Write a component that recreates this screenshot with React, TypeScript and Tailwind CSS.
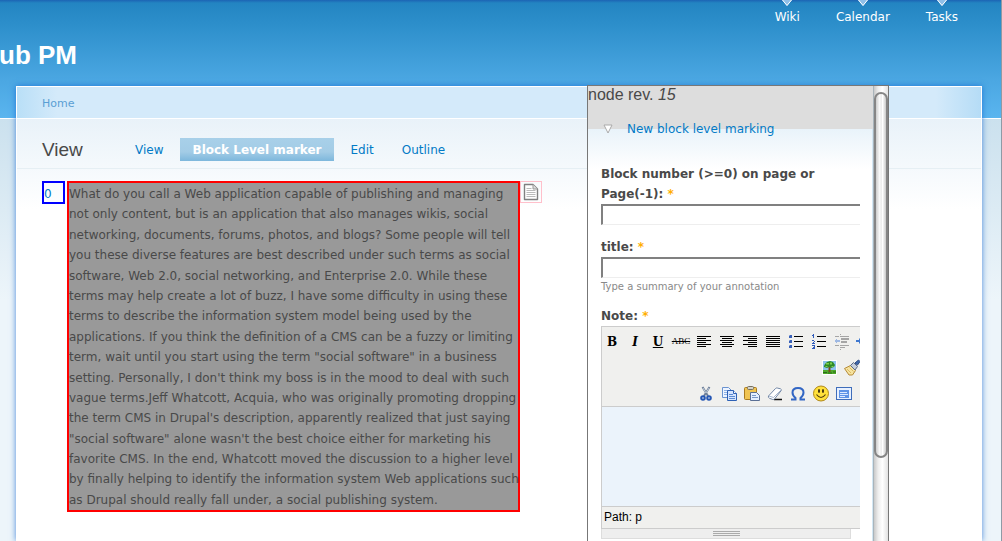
import React from "react";

const navLinks = ["Wiki", "Calendar", "Tasks"];

const sans = "font-['DejaVu_Sans',sans-serif]";
const arial = "font-['Liberation_Sans',sans-serif]";

function Lines({ rows }: { rows: [number, number][] }) {
  return (
    <svg width="20" height="20" viewBox="0 0 20 20" shapeRendering="crispEdges">
      {rows.map(([x, w], i) => (
        <rect key={i} x={x} y={4 + i * 2} width={w} height="1" fill="#000" />
      ))}
    </svg>
  );
}

function ListIcon({ numbered }: { numbered?: boolean }) {
  return (
    <svg width="20" height="20" viewBox="0 0 20 20" shapeRendering="crispEdges">
      {[4, 9, 14].map((y) => (
        <rect key={y} x="8" y={y} width="9" height="1" fill="#000" />
      ))}
      {numbered ? (
        <path
          d="M4 2h1v4H4zM3 3h1v1H3zM3 8h2v1H3zM5 9h1v1H5zM4 10h1v1H4zM3 11h3v1H3zM3 13h3v1H3zM5 14h1v3H5zM4 15h1v1H4zM3 16h2v1H3z"
          fill="#2f5bbb"
        />
      ) : (
        [4, 9, 14].map((y) => (
          <g key={y}>
            <rect x="3" y={y - 1} width="3" height="3" fill="#3a61b8" />
            <rect x="3" y={y - 1} width="1" height="1" fill="#8fa9dd" />
          </g>
        ))
      )}
    </svg>
  );
}

function Outdent() {
  return (
    <svg width="20" height="20" viewBox="0 0 20 20" shapeRendering="crispEdges" fill="#a5a5a5">
      <path d="M3 4h4v1H3zM8 4h9v1H8zM9 6h8v2H9zM9 9h6v2H9zM3 13h4v1H3zM8 13h9v1H8zM8 15h5v1H8zM8 2h1v1H8zM8 17h1v1H8z" />
      <path d="M2 9l3-3v2h3v2H5v2z" fill="#9fb9e3" />
    </svg>
  );
}

function IndentEdge() {
  return (
    <svg width="20" height="20" viewBox="0 0 20 20">
      <path d="M7 9l-3-3v2H1v2h3v2z" fill="#3f78cf" />
    </svg>
  );
}

function Tree() {
  return (
    <svg width="20" height="20" viewBox="0 0 20 20">
      <rect x="3" y="2" width="15" height="15" fill="#fff" />
      <rect x="4" y="3" width="13" height="9" fill="#8fc3ee" />
      <rect x="4" y="12" width="13" height="4" fill="#4fa92a" />
      <path d="M9.500 8h2v6h-2z" fill="#7a4a1c" />
      <path d="M5 8l1-2 2-2 3-1 3 1 2 3-1 2-3 1-2-1-2 1-3-1z" fill="#2f8a28" />
      <path d="M7 5h3v1.500H7zM11 4.500h2v2h-2zM12.500 8h2v1h-2zM6.500 8h2v1h-2z" fill="#7ed04c" />
      <path d="M4 14.500h4M9 15h4M14 14h3" stroke="#2a6b18" />
    </svg>
  );
}

function Brush() {
  return (
    <svg width="20" height="20" viewBox="0 0 20 20">
      <path d="M2.500 10.500l6-3 5 5-3 4.500H7z" fill="#f6e3a0" stroke="#b58a35" />
      <path d="M5 11l4 4M7.500 9.500l4 4" stroke="#dcbb66" />
      <path d="M8.500 7.500l3-3 4 4-2.500 3.500z" fill="#c6cfdd" stroke="#5d6b85" />
      <path d="M13 5l3.500-3 1.500 1.500L15.500 7z" fill="#3f68ac" stroke="#2d4c84" />
    </svg>
  );
}

function Scissors() {
  return (
    <svg width="20" height="20" viewBox="0 0 20 20" fill="none">
      <path d="M6.500 3l5.500 9M13.500 3L8 12" stroke="#6d7f99" strokeWidth="2" />
      <path d="M7 4l3 5M13 4l-3 5" stroke="#c1ccd9" />
      <circle cx="7" cy="14" r="1.800" stroke="#2456b4" strokeWidth="2" />
      <circle cx="13" cy="14" r="1.800" stroke="#2456b4" strokeWidth="2" />
    </svg>
  );
}

function Copy() {
  return (
    <svg width="20" height="20" viewBox="0 0 20 20">
      <path d="M3.500 3.500h6l3 3v7h-9z" fill="#edf4ff" stroke="#6a93d0" />
      <path d="M5 6.500h4M5 8.500h4M5 10.500h4" stroke="#8fb2e6" />
      <path d="M8.500 6.500h6l3 3v7h-9z" fill="#d6e5ff" stroke="#2e61b5" />
      <path d="M14.500 6.500v3h3" fill="#fff" stroke="#2e61b5" />
      <path d="M10 10.500h4M10 12.500h6M10 14.500h6" stroke="#5d8bd2" />
    </svg>
  );
}

function Paste() {
  return (
    <svg width="20" height="20" viewBox="0 0 20 20">
      <rect x="2.500" y="3.500" width="12" height="12" rx="1" fill="#f0c452" stroke="#a97a20" />
      <rect x="5.500" y="2.500" width="6" height="3" rx="1" fill="#d5d3c8" stroke="#77705f" />
      <path d="M8.500 8.500h6l3 3v5h-9z" fill="#e4eeff" stroke="#5a6f95" />
      <path d="M10 11.500h4M10 13.500h6" stroke="#7897c6" />
    </svg>
  );
}

function Eraser() {
  return (
    <svg width="20" height="20" viewBox="0 0 20 20">
      <path d="M9 15.500h8" stroke="#111" strokeWidth="1.500" />
      <path
        d="M3.500 12l7-7.500q.7-.7 1.700-.5l3.300.8q1.500.6.500 2L9.500 15q-.7.700-1.700.500l-3.300-1.200q-1.700-.800-1-2.300z"
        fill="#fff"
        stroke="#7186a5"
      />
      <path d="M4 12l4.500 1.500L16 6" fill="none" stroke="#a9b8cf" />
    </svg>
  );
}

function Omega() {
  return (
    <svg width="20" height="20" viewBox="0 0 20 20">
      <path
        d="M3 15.500h4.500v-1.500C5 12 4.500 10.500 4.500 8.500 4.500 5.500 7 4 10 4s5.500 1.500 5.500 4.500c0 2-.5 3.500-3 5.500v1.500H17"
        fill="none"
        stroke="#3266c4"
        strokeWidth="2"
      />
    </svg>
  );
}

function Smile() {
  return (
    <svg width="20" height="20" viewBox="0 0 20 20">
      <circle cx="10" cy="9.500" r="7.500" fill="#ffe03a" stroke="#b0881a" />
      <ellipse cx="8" cy="7" rx="1" ry="2" fill="#392a0b" />
      <ellipse cx="12" cy="7" rx="1" ry="2" fill="#392a0b" />
      <path d="M5.500 10.500q4.500 6 9 0" fill="none" stroke="#513b0b" strokeWidth="1.200" />
    </svg>
  );
}

function Frame() {
  return (
    <svg width="20" height="20" viewBox="0 0 20 20">
      <rect x="2.500" y="3.500" width="15" height="12" fill="#e8f1ff" stroke="#3f6dba" />
      <rect x="5" y="6" width="10" height="8" fill="#5f93e6" />
      <path d="M6 8.500h7M6 10.500h8M6 12.500h5" stroke="#dbe8ff" />
    </svg>
  );
}

function Tool({ label, children }: { label: string; children: React.ReactNode }) {
  return (
    <button type="button" aria-label={label} className="flex h-5 w-5 shrink-0 items-center justify-center">
      {children}
    </button>
  );
}

const left: [number, number][] = [[3, 14], [3, 9], [3, 14], [3, 9], [3, 14], [3, 9]];
const center: [number, number][] = [[3, 14], [5, 10], [3, 14], [5, 10], [3, 14], [5, 10]];
const right: [number, number][] = [[3, 14], [8, 9], [3, 14], [8, 9], [3, 14], [8, 9]];
const full: [number, number][] = [[3, 14], [3, 14], [3, 14], [3, 14], [3, 14], [3, 14]];

function Editor() {
  return (
    <div className="border-t border-l border-[#ccc]">
      <div className="flex h-[79px] flex-col justify-between overflow-hidden bg-[#f0f0ee] pt-1 pb-[2px] font-['DejaVu_Serif',serif] text-black">
        <div className="flex gap-[3px] pt-px">
          <Tool label="Bold"><b className="text-[12px]">B</b></Tool>
          <Tool label="Italic"><b className="text-[12px] italic">I</b></Tool>
          <Tool label="Underline"><b className="text-[12px] underline">U</b></Tool>
          <Tool label="Strikethrough"><s className="font-['Liberation_Serif',serif] text-[9px]">ABC</s></Tool>
          <Tool label="Align left"><Lines rows={left} /></Tool>
          <Tool label="Align center"><Lines rows={center} /></Tool>
          <Tool label="Align right"><Lines rows={right} /></Tool>
          <Tool label="Justify"><Lines rows={full} /></Tool>
          <Tool label="Bulleted list"><ListIcon /></Tool>
          <Tool label="Numbered list"><ListIcon numbered /></Tool>
          <Tool label="Outdent"><Outdent /></Tool>
          <Tool label="Indent"><IndentEdge /></Tool>
        </div>
        <div className="-mr-[2px] flex justify-end gap-[3px]">
          <Tool label="Insert image"><Tree /></Tool>
          <Tool label="Clean up code"><Brush /></Tool>
        </div>
        <div className="flex justify-end gap-[3px] pr-[6px]">
          <Tool label="Cut"><Scissors /></Tool>
          <Tool label="Copy"><Copy /></Tool>
          <Tool label="Paste"><Paste /></Tool>
          <Tool label="Remove formatting"><Eraser /></Tool>
          <Tool label="Special character"><Omega /></Tool>
          <Tool label="Smileys"><Smile /></Tool>
          <Tool label="Full screen"><Frame /></Tool>
        </div>
      </div>
      <textarea
        id="note"
        className="block h-[101px] w-full resize-none border-y border-[#ccc] bg-[#ebf3fb] outline-none"
      />
      <div className={`h-[22px] border-b border-[#ccc] bg-[#f0f0ee] pl-[2px] text-[12px] leading-5 text-black ${arial}`}>
        Path: p
      </div>
    </div>
  );
}

function Label({ htmlFor, children }: { htmlFor: string; children: React.ReactNode }) {
  return (
    <label htmlFor={htmlFor} className="block font-bold leading-5">
      {children} <span className="text-[#ffae00]">*</span>
    </label>
  );
}

const inputClass =
  "block h-[21px] w-full border-t-2 border-b border-l-2 border-t-[#808080] border-b-[#eee] border-l-[#808080] bg-white px-1 outline-none";

function AnnotationPanel() {
  return (
    <aside className="absolute top-[85px] right-[112px] bottom-0 flex w-[302px] border-x border-t border-[#777] bg-white">
      <div className="min-w-0 flex-1 overflow-hidden">
        <div className={`h-[43px] bg-[#ddd] pt-px text-[16px] leading-4 ${arial}`}>
          node rev. <em>15</em>
        </div>
        <form className="h-full border-r border-[#d3e7f4] bg-[linear-gradient(#e9f3fa,#fff_40px)] pr-3 pl-[13px]">
          <a href="#marking" className="flex h-0 items-center text-[#027ac6]">
            <svg width="14" height="10" viewBox="0 0 14 10" className="mr-3">
              <path d="M3 1h8L7 9z" fill="#fff" stroke="#aaa" />
            </svg>
            New block level marking
          </a>
          <div className="pt-[35px]">
            <Label htmlFor="block">Block number (&gt;=0) on page or Page(-1):</Label>
            <input id="block" className={inputClass} />
          </div>
          <div className="pt-3">
            <Label htmlFor="title">title:</Label>
            <input id="title" className={inputClass} />
            <p className="text-[10px] leading-[17px] text-[#898989]">Type a summary of your annotation</p>
          </div>
          <div className="pt-[11px]">
            <Label htmlFor="note">Note:</Label>
            <Editor />
            <div className="mr-[9px] flex h-[10px] flex-col items-center justify-center gap-px border border-t-0 border-[#ddd] bg-[#eee]">
              <i className="h-px w-[27px] bg-[#aaa]" />
              <i className="h-px w-[27px] bg-[#aaa]" />
              <i className="h-px w-[27px] bg-[#aaa]" />
            </div>
          </div>
        </form>
      </div>
      <div className="w-[15px] shrink-0 border-l border-[#a9b4bb] bg-[linear-gradient(90deg,#c9c9c9,#eee_30%,#fff_60%,#e2e2e2)] pt-[6px]">
        <div className="h-[366px] rounded-full border-2 border-[#858585] bg-[linear-gradient(90deg,#ccc,#fff_40%,#e6e6e6_50%,#fff_65%,#c8c8c8)]" />
      </div>
    </aside>
  );
}

export default function App() {
  return (
    <div
      className={`relative h-screen overflow-hidden border-r border-[#8f9aa5] bg-[#edf5fa] text-[12px] text-[#494949] ${sans}`}
    >
      <div className="flex h-full flex-col bg-[linear-gradient(#1c64b4_0px,#2385c2_3px,#2d8fcb_25px,#4ba7e2_80px,#5ab5ef_118px,#fff_118px,#fff_119px,#cbe1ee_119px,#edf5fa_300px)]">
        <header className="flex h-[86px] shrink-0 items-start justify-between">
          <h1 className={`-ml-px pt-[39px] text-[26px] leading-8 font-bold text-white ${arial}`}>ub PM</h1>
          <nav className="flex gap-9 pr-[43px]">
            {navLinks.map((name) => (
              <a key={name} href={`#${name.toLowerCase()}`} className="flex flex-col items-center leading-5 text-white">
                <svg width="12" height="7" viewBox="0 0 12 7">
                  <path d="M1 0l5 6 5-6z" fill="#8fbfe8" />
                  <path d="M1.500 0L6 5.500 10.500 0" fill="none" stroke="#fff" />
                </svg>
                {name}
              </a>
            ))}
          </nav>
        </header>
        <div className="mr-[19px] ml-4 min-h-0 flex-1 border-x border-t border-white bg-white shadow-[0_0_6px_#1466d0c0]">
          <div className="h-[31px] bg-[linear-gradient(90deg,#b9dff7,#d4eafa_40px,#d4eafa_calc(100%-45px),#b5dcf6)] pl-[25px] text-[11px] leading-[34px]">
            <a href="#home" className="text-[#5a9fd4]">Home</a>
          </div>
          <main className="h-full border-t border-white bg-[linear-gradient(#e9f2f9,#fff_90px)] pl-[25px]">
            <div className="-ml-[25px] flex h-[50px] items-center border-b border-[#e6eff4] pt-3 pl-[25px]">
              <h2 className={`w-[81px] text-[19px] leading-6 ${arial}`}>View</h2>
              <nav className="flex items-center leading-[23px] text-[#027ac6]">
                <a href="#view" className="px-3 pt-px">View</a>
                <a
                  href="#marker"
                  className="mx-[5px] h-[23px] bg-[linear-gradient(#a8d0e9,#a3cce6_60%,#7db7dc)] px-3 pt-px font-bold text-white"
                >
                  Block Level marker
                </a>
                <a href="#edit" className="px-3 pt-px">Edit</a>
                <a href="#outline" className="ml-1 px-3 pt-px">Outline</a>
              </nav>
            </div>
            <div className="flex items-start pt-3">
              <a
                href="#block-0"
                className="mr-[2px] h-[23px] w-[23px] border-2 border-[#0000ff] pt-px leading-5 text-[#027ac6]"
              >
                0
              </a>
              <p className="w-[453px] border-2 border-[#ff0000] bg-[#999] pt-px leading-[1.7]">
                What do you call a Web application capable of publishing and managing not only content, but is an
                application that also manages wikis, social networking, documents, forums, photos, and blogs? Some
                people will tell you these diverse features are best described under such terms as social software, Web
                2.0, social networking, and Enterprise 2.0. While these terms may help create a lot of buzz, I have some
                difficulty in using these terms to describe the information system model being used by the applications.
                If you think the definition of a CMS can be a fuzzy or limiting term, wait until you start using the
                term "social software" in a business setting. Personally, I don't think my boss is in the mood to deal
                with such vague terms.Jeff Whatcott, Acquia, who was originally promoting dropping the term CMS in
                Drupal's description, apparently realized that just saying "social software" alone wasn't the best
                choice either for marketing his favorite CMS. In the end, Whatcott moved the discussion to a higher
                level{" "}
                <span className="whitespace-nowrap">
                  by finally helping to identify the information system Web applications such
                </span>{" "}
                as Drupal should really fall under, a social publishing system.
              </p>
              <button type="button" aria-label="Add note" className="h-[22px] w-[22px] border border-[#ffc0cb] pl-[2px]">
                <svg width="16" height="18" viewBox="0 0 16 18">
                  <path
                    d="M1.500 1.500h8.500l4.500 4.500v10.500h-13z"
                    fill="#fff"
                    stroke="#808080"
                    strokeWidth="1.400"
                    strokeLinejoin="round"
                  />
                  <path d="M10 1.500V6h4.500" fill="#ddd" stroke="#999" />
                  <path d="M3.500 5.500h5M3.500 7.500h9M3.500 9.500h9M3.500 11.500h9M3.500 13.500h9" stroke="#bbb" />
                </svg>
              </button>
            </div>
          </main>
        </div>
      </div>
      <AnnotationPanel />
    </div>
  );
}
